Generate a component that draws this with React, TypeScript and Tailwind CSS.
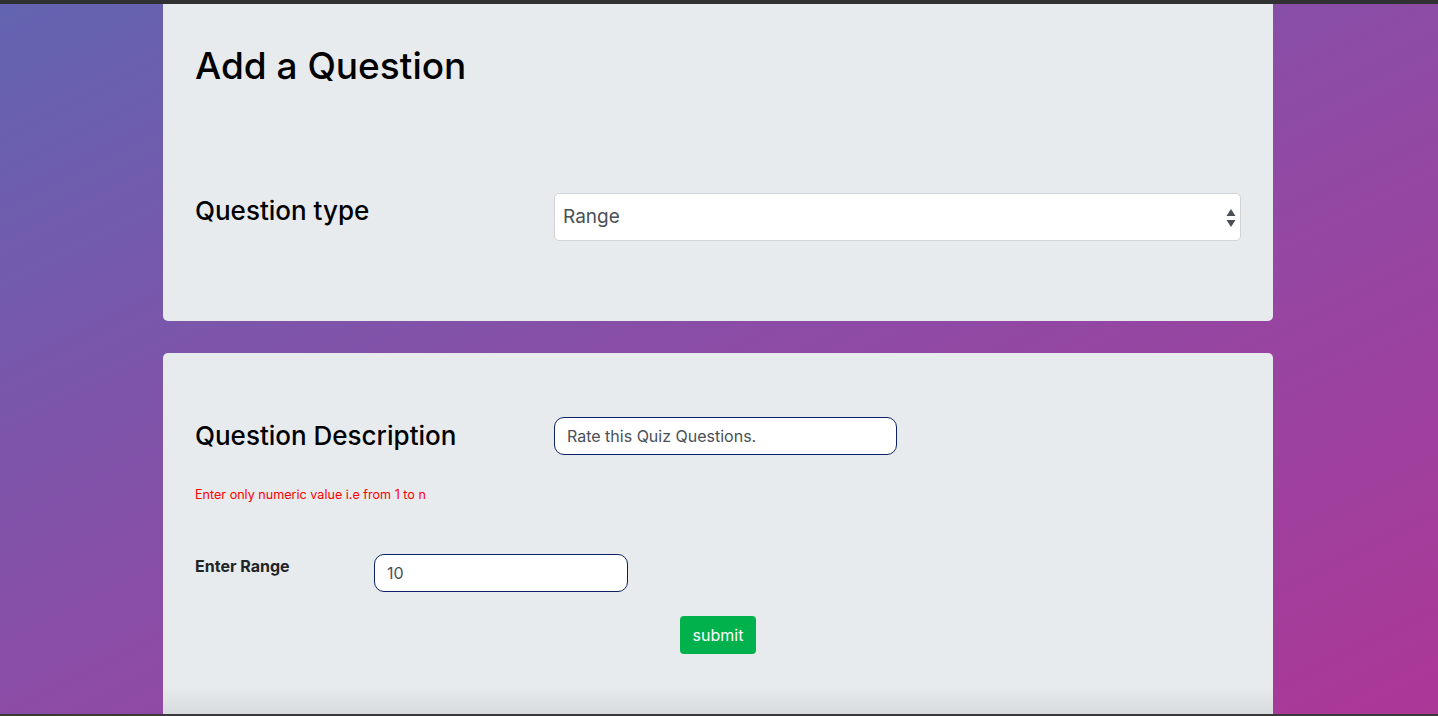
import React from "react";

export default function App() {
  return (
    <div
      className="relative flex h-[716px] w-full flex-col overflow-hidden bg-[linear-gradient(to_bottom_right,#6264b1,#8c4ca6_50%,#ac3797)]"
      style={{ fontFamily: "Inter, 'Noto Sans', sans-serif" }}
    >
      <div className="h-[4px] w-full shrink-0 bg-[#2f3133]" />
      <div className="ml-[163px] flex w-[1110px] flex-1 flex-col gap-[32px]">
        <div className="flex h-[317px] shrink-0 flex-col rounded-b-[5px] bg-[#e8ebee] px-[32px] pt-[36px]">
          <h1 className="text-[37px] font-medium leading-[52px] text-black">Add a Question</h1>
          <div className="mt-[101px] flex items-start">
            <div className="w-[359px] pt-[1px] text-[26px] font-medium leading-[34px] text-black">Question type</div>
            <div className="relative flex h-[48px] flex-1 items-center rounded-[5px] border border-[#ced4da] bg-white pl-[8px]">
              <span className="text-[19px] text-[#495057]">Range</span>
              <svg className="absolute right-[3px] top-[13px]" width="12" height="22" viewBox="0 0 12 22">
                <path d="M6 2 L10.5 9 H1.5 Z" fill="#495057" />
                <path d="M6 20 L10.5 13 H1.5 Z" fill="#495057" />
              </svg>
            </div>
          </div>
        </div>
        <div className="flex flex-1 flex-col rounded-t-[5px] bg-[linear-gradient(to_bottom,#e8ebee_0%,#e8ebee_92%,#d9dcdf_100%)] px-[32px] pt-[64px]">
          <div className="flex items-center">
            <div className="w-[359px] text-[26px] font-medium leading-[34px] text-black">Question Description</div>
            <div className="flex h-[38px] w-[343px] items-center rounded-[10px] border border-[#0a2166] bg-white px-[12px] text-[16px] text-[#495057]">
              Rate this Quiz Questions.
            </div>
          </div>
          <div className="mt-[31px] text-[12.6px] leading-[18px] text-[#ff0000]">Enter only numeric value i.e from 1 to n</div>
          <div className="mt-[50px] flex items-start">
            <div className="w-[179px] pt-[2px] text-[16px] font-bold leading-[20px] text-[#212529]">Enter Range</div>
            <div className="flex h-[38px] w-[254px] items-center rounded-[10px] border border-[#0a2166] bg-white px-[12px] text-[16px] text-[#495057]">
              10
            </div>
          </div>
          <div className="mt-[24px] flex justify-center">
            <button className="h-[38px] w-[76px] rounded-[4px] bg-[#00b14c] text-[16px] text-white">submit</button>
          </div>
        </div>
      </div>
      <div className="h-[2px] w-full shrink-0 bg-[#3a3a3c]" />
    </div>
  );
}
